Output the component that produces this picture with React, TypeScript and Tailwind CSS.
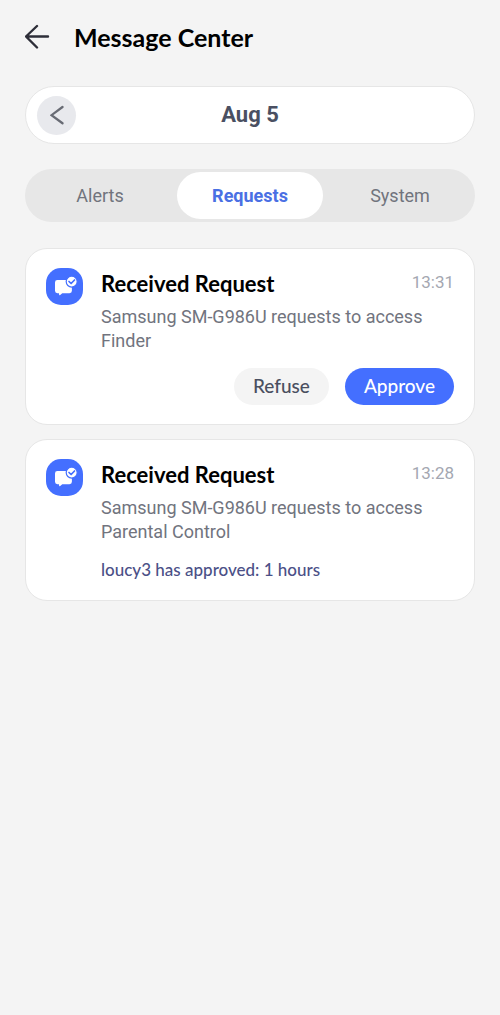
import { useState } from "react";
import clsx from "clsx";

type Tab = "Alerts" | "Requests" | "System";
type RequestItem = {
  id: number;
  title: string;
  time: string;
  body: string;
  result?: string;
};

const TABS: Tab[] = ["Alerts", "Requests", "System"];

const REQUESTS: RequestItem[] = [
  {
    id: 1,
    title: "Received Request",
    time: "13:31",
    body: "Samsung SM-G986U requests to access Finder",
  },
  {
    id: 2,
    title: "Received Request",
    time: "13:28",
    body: "Samsung SM-G986U requests to access Parental Control",
    result: "loucy3 has approved: 1 hours",
  },
];

function RequestIcon() {
  return (
    <svg viewBox="0 0 37 37" className="size-[37px] shrink-0" aria-hidden="true">
      <rect width="37" height="37" rx="15" fill="#446fff" />
      <path
        d="M11.4 12H23.5a2.4 2.4 0 0 1 2.4 2.4V22.800a2.400 2.400 0 0 1-2.400 2.400H16.300l-2.100 1.800q-1 .6-1.100-.5l-.1-1.300H11.400a2.400 2.400 0 0 1-2.400-2.400V14.400a2.400 2.400 0 0 1 2.400-2.400Z"
        fill="#fff"
      />
      <circle cx="25.700" cy="13.600" r="5.500" fill="#fff" stroke="#446fff" strokeWidth="1.200" />
      <path
        d="m23 13.500 2.100 2 3.400-3.500"
        fill="none"
        stroke="#446fff"
        strokeWidth="1.700"
        strokeLinecap="round"
        strokeLinejoin="round"
      />
    </svg>
  );
}

function RequestCard({ item }: { item: RequestItem }) {
  return (
    <li className="flex gap-[18px] rounded-[22px] border border-[#e6e6e6] bg-white px-5 py-[19px]">
      <RequestIcon />
      <div className="min-w-0 flex-1">
        <div className="flex items-start justify-between gap-3">
          <h2 className="font-['Lato','Noto_Sans',sans-serif] text-[22px] leading-8 font-bold text-black">
            {item.title}
          </h2>
          <time className="text-[17px] leading-7 text-[#a4a7b1]">{item.time}</time>
        </div>
        <p className="mt-[5px] text-[18px] leading-6 text-[#71747e]">{item.body}</p>
        {item.result ? (
          <p className="mt-[15px] font-['Lato','Noto_Sans',sans-serif] text-[17px] leading-[22px] font-medium text-[#4b5087]">
            {item.result}
          </p>
        ) : (
          <div className="mt-[15px] flex justify-end gap-4 font-['Lato','Noto_Sans',sans-serif] text-[19px] font-medium">
            <button type="button" className="h-[37px] rounded-full bg-[#f4f4f4] px-[19px] text-[#4a4f60]">
              Refuse
            </button>
            <button type="button" className="h-[37px] rounded-full bg-[#446fff] px-[19px] text-white">
              Approve
            </button>
          </div>
        )}
      </div>
    </li>
  );
}

export default function App() {
  const [tab, setTab] = useState<Tab>("Requests");

  return (
    <div className="min-h-screen bg-[#f4f4f4] px-[25px] pt-[15px] pb-8 font-['Roboto',sans-serif]">
      <header className="flex h-11 items-center gap-6">
        <button type="button" aria-label="Back">
          <svg viewBox="0 0 25 26" className="h-[26px] w-[25px]" fill="none" aria-hidden="true">
            <path
              d="M23 12.500H1M12 2 1 12.500l11 11"
              stroke="#2d2e38"
              strokeWidth="2.400"
              strokeLinecap="round"
              strokeLinejoin="round"
            />
          </svg>
        </button>
        <h1 className="font-['Lato','Noto_Sans',sans-serif] text-[25px] leading-8 font-bold text-black">
          Message Center
        </h1>
      </header>

      {/* Day switcher */}
      <div className="mt-[27px] grid h-[58px] grid-cols-[40px_1fr_40px] items-center rounded-full border border-[#e6e6e6] bg-white px-[11px]">
        <button
          type="button"
          aria-label="Previous day"
          className="flex size-[39px] items-center justify-center rounded-full bg-[#e8e9ed]"
        >
          <svg viewBox="0 0 14 20" className="h-5 w-3.5" fill="none" aria-hidden="true">
            <path d="M12.500 2 1.500 10.200l11 8" stroke="#686b74" strokeWidth="2.300" strokeLinecap="round" />
          </svg>
        </button>
        <span className="text-center text-[22px] leading-7 font-bold text-[#4a5062]">Aug 5</span>
      </div>

      <div role="tablist" className="mt-[25px] grid h-[53px] grid-cols-3 rounded-full bg-[#e7e7e7] py-[3px]">
        {TABS.map(t => (
          <button
            key={t}
            type="button"
            role="tab"
            aria-selected={tab === t}
            onClick={() => setTab(t)}
            className={clsx(
              "mx-0.5 rounded-full text-[18px]",
              tab === t ? "bg-white font-bold text-[#4a70e4]" : "text-[#71747d]"
            )}
          >
            {t}
          </button>
        ))}
      </div>

      {tab === "Requests" && (
        <ul className="mt-[26px] flex flex-col gap-[14px]">
          {REQUESTS.map(r => (
            <RequestCard key={r.id} item={r} />
          ))}
        </ul>
      )}
    </div>
  );
}
